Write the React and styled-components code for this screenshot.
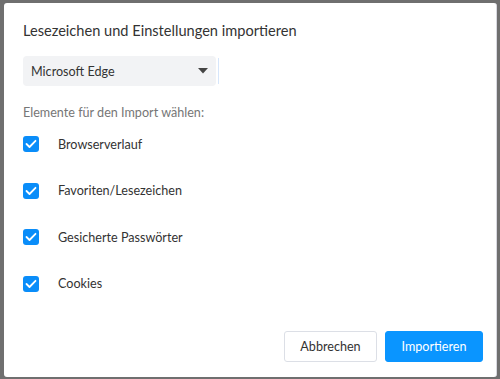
import styled, { createGlobalStyle } from "styled-components";

const GlobalStyle = createGlobalStyle`
  html, body {
    margin: 0;
    padding: 0;
    width: 500px;
    height: 379px;
    overflow: hidden;
    background: #6f6f6f;
  }
  * { box-sizing: border-box; }
`;

const ITEMS = ["Browserverlauf", "Favoriten/Lesezeichen", "Gesicherte Passwörter", "Cookies"];

export default function App() {
  return (
    <>
      <GlobalStyle />
      <SCBackdrop>
        <SCDialog>
          <SCTitle>Lesezeichen und Einstellungen importieren</SCTitle>

          <SCSelectRow>
            <SCSelect>
              <span>Microsoft Edge</span>
              <svg width="10" height="6" viewBox="0 0 10 6">
                <path d="M0 0 L10 0 L5 5.5 Z" fill="#444" />
              </svg>
            </SCSelect>
            <SCCaret />
          </SCSelectRow>

          <SCLabel>Elemente für den Import wählen:</SCLabel>

          <SCList>
            {ITEMS.map((item) => (
              <SCItem key={item}>
                <SCCheck>
                  <svg width="12" height="10" viewBox="0 0 12 10">
                    <path d="M1.5 5 L4.5 8 L10.5 1.8" fill="none" stroke="#fff" strokeWidth="1.8" strokeLinecap="round" strokeLinejoin="round" />
                  </svg>
                </SCCheck>
                {item}
              </SCItem>
            ))}
          </SCList>

          <SCFooter>
            <SCButton>Abbrechen</SCButton>
            <SCButton primary>Importieren</SCButton>
          </SCFooter>
        </SCDialog>
      </SCBackdrop>
    </>
  );
}

const SCBackdrop = styled.div`
  width: 500px;
  height: 379px;
  padding: 3px 3px 2px 4px;
  font-family: "Lato", "Noto Sans", sans-serif;
`;

const SCDialog = styled.div`
  width: 100%;
  height: 100%;
  background: #fff;
  border-radius: 3px;
  border-right: 1px solid #d8d8e0;
  padding: 18px 13px 15px 19px;
  display: flex;
  flex-direction: column;
`;

const SCTitle = styled.h1`
  margin: 0;
  font-size: 14.6px;
  font-weight: 400;
  color: #333;
  line-height: 20px;
`;

const SCSelectRow = styled.div`
  display: flex;
  align-items: center;
  margin-top: 15px;
`;

const SCSelect = styled.div`
  width: 193px;
  height: 30px;
  background: #f2f3f5;
  border-radius: 4px;
  display: flex;
  align-items: center;
  justify-content: space-between;
  padding: 0 8px 0 8px;
  font-size: 12.6px;
  color: #333;
`;

const SCCaret = styled.div`
  width: 1px;
  height: 26px;
  margin-left: 2px;
  background: #d6e6fb;
`;

const SCLabel = styled.div`
  margin-top: 18px;
  font-size: 12.6px;
  color: #767676;
  line-height: 18px;
`;

const SCList = styled.div`
  display: flex;
  flex-direction: column;
  gap: 30.5px;
  margin-top: 14px;
`;

const SCItem = styled.label`
  display: flex;
  align-items: center;
  gap: 19px;
  height: 16px;
  font-size: 12.6px;
  color: #333;
`;

const SCCheck = styled.span`
  width: 16px;
  height: 16px;
  border-radius: 3px;
  background: #0a8df9;
  display: flex;
  align-items: center;
  justify-content: center;
`;

const SCFooter = styled.div`
  margin-top: auto;
  display: flex;
  justify-content: flex-end;
  gap: 8px;
`;

const SCButton = styled.button`
  height: 31px;
  padding: 0;
  width: ${(p) => (p.primary ? "98px" : "93px")};
  border-radius: 3px;
  font-family: inherit;
  font-size: 12.6px;
  border: 1px solid ${(p) => (p.primary ? "#0a95ff" : "#dcdfe6")};
  background: ${(p) => (p.primary ? "#0a95ff" : "#fff")};
  color: ${(p) => (p.primary ? "#fff" : "#333")};
`;
